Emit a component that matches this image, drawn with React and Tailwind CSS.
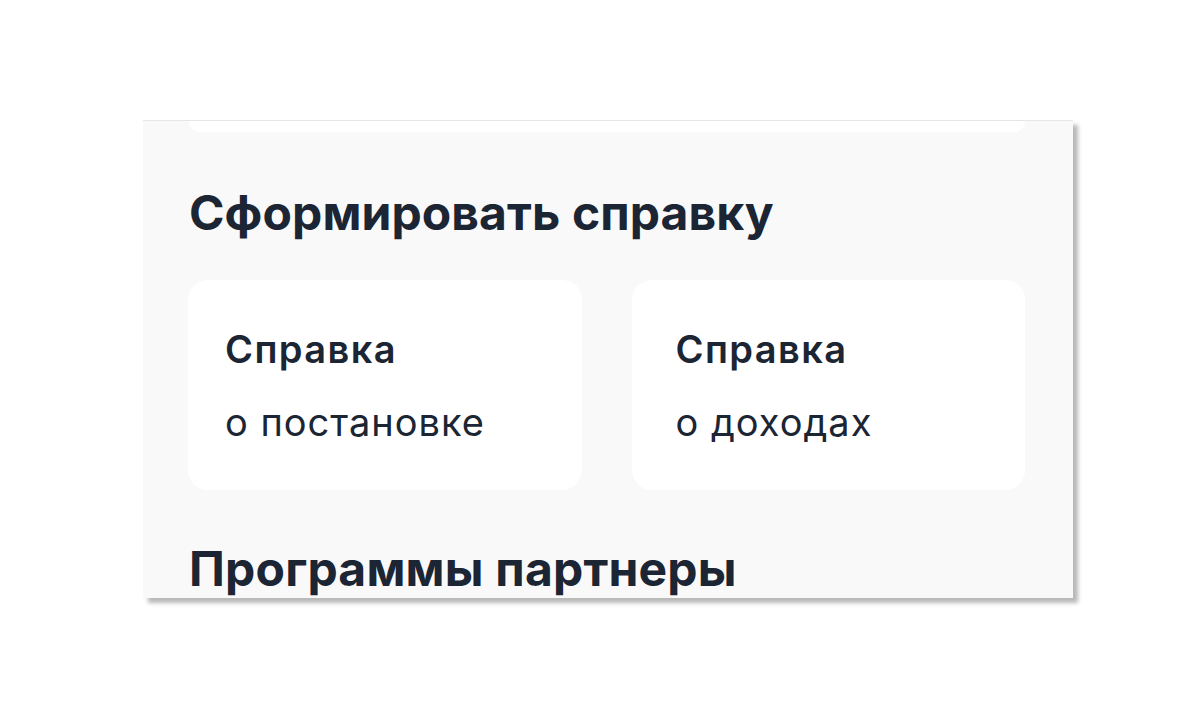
import React from 'react';

const cards = [
  { title: 'Справка', subtitle: 'о постановке', pad: 'pl-[37px]' },
  { title: 'Справка', subtitle: 'о доходах', pad: 'pl-[44px]' },
];

const App = () => {
  return (
    <div className="w-full h-[721px] bg-white pt-[120px] pl-[143px] font-['Inter',sans-serif] text-[#1b2533]">
      <div className="w-[930px] h-[478px] overflow-hidden bg-[#f9f9f9] border-t border-[#e6e6e6] shadow-[5px_5px_4px_rgba(0,0,0,0.28)] pl-[46px] pr-[48px]">
        {/* previous card, scrolled out of view */}
        <div className="h-[11px] bg-white rounded-b-[20px]"></div>

        <h2 className="mt-[52px] text-[48px] leading-[58px] font-bold tracking-[0.1px]">Сформировать справку</h2>

        <div className="mt-[38px] grid grid-cols-2 gap-[50px] -ml-[1px]">
          {cards.map((card) => (
            <div key={card.subtitle} className={`h-[210px] bg-white rounded-[20px] pt-[46px] ${card.pad}`}>
              <div className="text-[38px] leading-[46px] font-semibold tracking-[1.4px]">{card.title}</div>
              <div className="mt-[27px] text-[38px] leading-[46px] font-normal tracking-[1px]">{card.subtitle}</div>
            </div>
          ))}
        </div>

        <h2 className="mt-[50px] text-[48px] leading-[58px] font-bold tracking-[0.2px]">Программы партнеры</h2>
      </div>
    </div>
  );
};

export default App;
